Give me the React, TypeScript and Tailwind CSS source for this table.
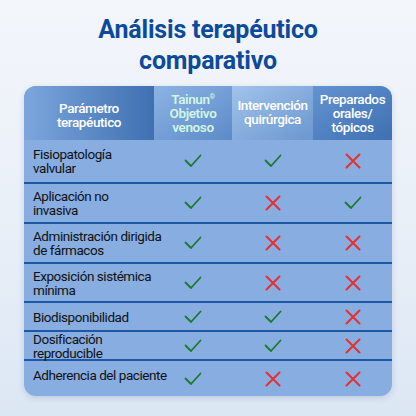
import React from "react";

type Mark = "yes" | "no";

const rows: { lines: string[]; h: string; extra?: string; marks: Mark[] }[] = [
  { lines: ["Fisiopatología", "valvular"], h: "h-[42px]", marks: ["yes", "yes", "no"] },
  { lines: ["Aplicación no", "invasiva"], h: "h-[40px]", marks: ["yes", "no", "yes"] },
  { lines: ["Administración dirigida", "de fármacos"], h: "h-[40px]", marks: ["yes", "no", "no"] },
  { lines: ["Exposición sistémica", "mínima"], h: "h-[39px]", marks: ["yes", "no", "no"] },
  { lines: ["Biodisponibilidad"], h: "h-[29px]", marks: ["yes", "yes", "no"] },
  { lines: ["Dosificación", "reproducible"], h: "h-[29px]", extra: "leading-[12px]", marks: ["yes", "yes", "no"] },
  { lines: ["Adherencia del paciente"], h: "h-[37px]", extra: "pb-[8px]", marks: ["yes", "no", "no"] },
];

const Check = () => (
  <svg width="18" height="14" viewBox="0 0 18 14" fill="none">
    <path d="M1.5 6.5 L7 12 L16.5 1.5" stroke="#1c7a2c" strokeWidth="1.8" strokeLinecap="round" strokeLinejoin="round" />
  </svg>
);

const Cross = () => (
  <svg width="16" height="16" viewBox="0 0 16 16" fill="none">
    <path d="M1.5 1.5 L14.5 14.5 M14.5 1.5 L1.5 14.5" stroke="#e5322f" strokeWidth="2" strokeLinecap="round" />
  </svg>
);

const HeadCell = ({ lines, className }: { lines: React.ReactNode[]; className: string }) => (
  <div className={`flex items-center justify-center ${className}`}>
    <div className="text-center">
      {lines.map((l, i) => (
        <div key={i}>{l}</div>
      ))}
    </div>
  </div>
);

const App: React.FC = () => {
  return (
    <div
      className="w-[416px] h-[416px] overflow-hidden bg-gradient-to-b from-[#f3f6fb] via-[#eaf0f8] to-[#dce7f4] flex flex-col items-center"
      style={{ fontFamily: "Roboto, 'Liberation Sans', sans-serif" }}
    >
      {/* Title */}
      <h1 className="mt-[14px] text-[25px] leading-[31px] font-bold text-[#0c4a9c] text-center tracking-[-0.2px]">
        Análisis terapéutico
        <br />
        comparativo
      </h1>

      {/* Table */}
      <div className="mt-[10px] w-[368px] rounded-[12px] overflow-hidden bg-[#87ade1] shadow-[0_2px_6px_rgba(40,80,140,0.18)]">
        <div className="grid grid-cols-[130px_78px_81px_79px] h-[54px] text-white text-[13.5px] leading-[14px] tracking-[-0.4px]">
          <HeadCell
            lines={["Parámetro", "terapéutico"]}
            className="bg-gradient-to-r from-[#7ca6dd] to-[#3f70b0] font-medium pt-[4px]"
          />
          <HeadCell
            lines={[
              <>
                Tainun<sup className="text-[7px] -top-[5px]">®</sup>
              </>,
              "Objetivo",
              "venoso",
            ]}
            className="bg-gradient-to-br from-[#8db3e4] to-[#5c8bc8] font-semibold text-[#d2f6e4]"
          />
          <HeadCell
            lines={["Intervención", "quirúrgica"]}
            className="bg-gradient-to-br from-[#a2c3ec] to-[#6b97cf] font-medium pb-[2px]"
          />
          <HeadCell
            lines={["Preparados", "orales/", "tópicos"]}
            className="bg-gradient-to-br from-[#6493d0] to-[#3e70b2] font-medium"
          />
        </div>

        {rows.map((r, i) => (
          <div
            key={r.lines.join(" ")}
            className={`grid grid-cols-[130px_78px_81px_79px] ${r.h} ${i > 0 ? "border-t-2 border-[#1d58a6]" : ""}`}
          >
            <div
              className={`flex flex-col justify-center pl-[9px] whitespace-nowrap text-[13.5px] leading-[14px] tracking-[-0.45px] text-[#111] ${r.extra ?? ""}`}
            >
              {r.lines.map((l) => (
                <span key={l}>{l}</span>
              ))}
            </div>
            {r.marks.map((m, j) => (
              <div key={j} className="flex items-center justify-center">
                {m === "yes" ? <Check /> : <Cross />}
              </div>
            ))}
          </div>
        ))}
      </div>
    </div>
  );
};

export default App;
